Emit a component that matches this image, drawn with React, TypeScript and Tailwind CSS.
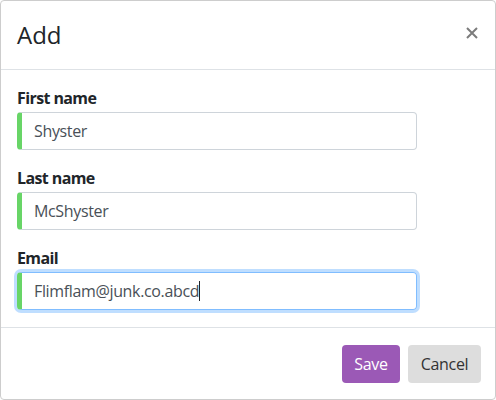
import React from "react";

const fields = [
  { label: "First name", value: "Shyster", focused: false },
  { label: "Last name", value: "McShyster", focused: false },
  { label: "Email", value: "Flimflam@junk.co.abcd", focused: true },
];

const Field = ({ label, value, focused }: { label: string; value: string; focused: boolean }) => (
  <div className="mb-4 last:mb-0">
    <label className="block font-bold text-[16px] leading-6 mb-[2px] tracking-[-0.6px] text-[#212529]">{label}</label>
    <div
      className={`flex items-center w-[400px] h-[38px] rounded-[4px] border border-l-[5px] pl-3 text-[16px] tracking-[-0.35px] text-[#495057] ${
        focused ? "border-[#80bdff] border-l-[#68d567] shadow-[0_0_0_3px_rgba(0,123,255,0.25)]" : "border-[#ced4da] border-l-[#68d567]"
      }`}
    >
      <span>{value}</span>
      {focused && <span className="w-px h-[20px] bg-[#212529]" />}
    </div>
  </div>
);

export default function App() {
  return (
    <div className="w-[496px] h-[400px] bg-white border border-[#cdcdcd] rounded-[4px] flex flex-col font-['Open_Sans','Noto_Sans',sans-serif] text-[#212529]">
      <div className="flex items-start justify-between px-4 py-4 h-[69px] border-b border-[#dee2e6]">
        <h4 className="text-[24px] leading-[36px] font-normal">Add</h4>
        <svg width="12" height="12" viewBox="0 0 12 12" className="mt-[10px] mr-[1px]">
          <path d="M1 1 L11 11 M11 1 L1 11" stroke="#7c7c7c" strokeWidth="2" />
        </svg>
      </div>
      <div className="pt-4 px-4 pb-[17px]">
        {fields.map((f) => (
          <Field key={f.label} {...f} />
        ))}
      </div>
      <div className="flex flex-1 items-center justify-end gap-2 pr-[14px] border-t border-[#dee2e6]">
        <button className="w-[58px] h-[38px] rounded-[4px] bg-[#9b59b6] text-white text-[16px] tracking-[-0.3px]">Save</button>
        <button className="w-[73px] h-[38px] rounded-[4px] bg-[#dddddd] text-[#333] text-[16px] tracking-[-0.3px]">Cancel</button>
      </div>
    </div>
  );
}
